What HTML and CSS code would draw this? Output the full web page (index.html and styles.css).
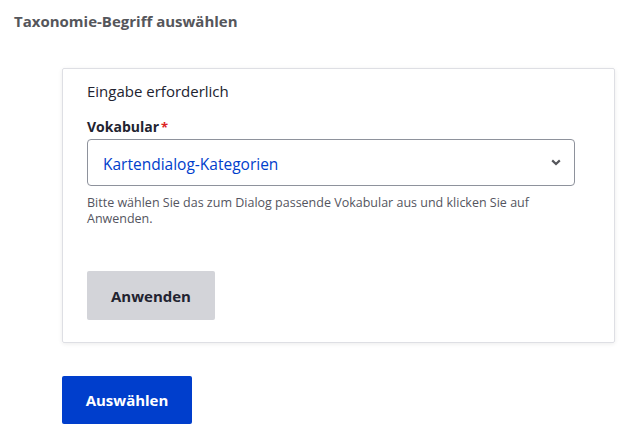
FILE: index.html
```html
<!DOCTYPE html>
<html lang="de">
<head>
<meta charset="utf-8">
<title>Taxonomie-Begriff auswählen</title>
<link rel="stylesheet" href="styles.css">
</head>
<body>
<div class="dialog">
  <h1 class="dialog-title">Taxonomie-Begriff auswählen</h1>
  <div class="dialog-body">
    <fieldset class="card">
      <legend class="card-legend">Eingabe erforderlich</legend>
      <div class="form-item">
        <label class="form-label" for="vocab">Vokabular<span class="required">*</span></label>
        <div class="select-wrap">
          <select class="select" id="vocab">
            <option>Kartendialog-Kategorien</option>
          </select>
          <svg class="chevron" width="10" height="7" viewBox="0 0 10 7" aria-hidden="true"><path d="M1.2 1.4 L5 5 L8.8 1.4" fill="none" stroke="#55565b" stroke-width="2.2"/></svg>
        </div>
        <div class="description">Bitte wählen Sie das zum Dialog passende Vokabular aus und klicken Sie auf Anwenden.</div>
      </div>
      <button class="button button-secondary" type="button">Anwenden</button>
    </fieldset>
    <div class="actions">
      <button class="button button-primary" type="button">Auswählen</button>
    </div>
  </div>
</div>
</body>
</html>
```
FILE: styles.css
```css
* { box-sizing: border-box; }
html, body { margin: 0; padding: 0; background: #fff; }
body {
  font-family: "Open Sans", "Noto Sans", sans-serif;
  color: #222330;
  width: 633px;
  height: 443px;
  overflow: hidden;
}
.dialog-title {
  margin: 0;
  padding: 10px 14px 0 14px;
  font-size: 15px;
  line-height: 22px;
  font-weight: 700;
  color: #55565b;
}
.dialog-body {
  padding: 0 18px 0 62px;
  margin-top: 36px;
}
.card {
  margin: 0;
  width: 553px;
  height: 275px;
  border: 1px solid #dedfe4;
  border-radius: 2px;
  box-shadow: 0 1px 4px rgba(0,0,0,0.08);
  padding: 49px 24px 0 24px;
  position: relative;
  background: #fff;
}
.card-legend {
  position: absolute;
  top: 12px;
  left: 24px;
  padding: 0;
  font-size: 15px;
  line-height: 20px;
  color: #222330;
}
.form-item { margin: 0; }
.form-label {
  display: block;
  font-size: 14px;
  font-weight: 700;
  line-height: 18px;
  color: #222330;
  margin-bottom: 3px;
}
.required {
  color: #dc2323;
  margin-left: 2px;
  font-size: 13px;
}
.select-wrap {
  position: relative;
  width: 488px;
}
.select {
  display: block;
  appearance: none;
  -webkit-appearance: none;
  width: 488px;
  height: 47px;
  border: 1px solid #8e929c;
  border-radius: 4px;
  background: #fff;
  padding: 2px 40px 0 15px;
  font-family: inherit;
  font-size: 15.5px;
  color: #003ecc;
}
.chevron {
  position: absolute;
  right: 14px;
  top: 20px;
}
.description {
  margin-top: 9px;
  font-size: 12.5px;
  line-height: 16px;
  color: #545560;
  width: 480px;
}
.button {
  font-family: inherit;
  font-weight: 700;
  font-size: 15px;
  line-height: 16px;
  border: 0;
  border-radius: 2px;
  cursor: pointer;
}
.button-secondary {
  margin-top: 44px;
  width: 128px;
  height: 49px;
  background: #d3d4d9;
  color: #222330;
}
.actions {
  margin-top: 33px;
}
.button-primary {
  width: 130px;
  height: 48px;
  background: #003ecc;
  color: #fff;
}
```
